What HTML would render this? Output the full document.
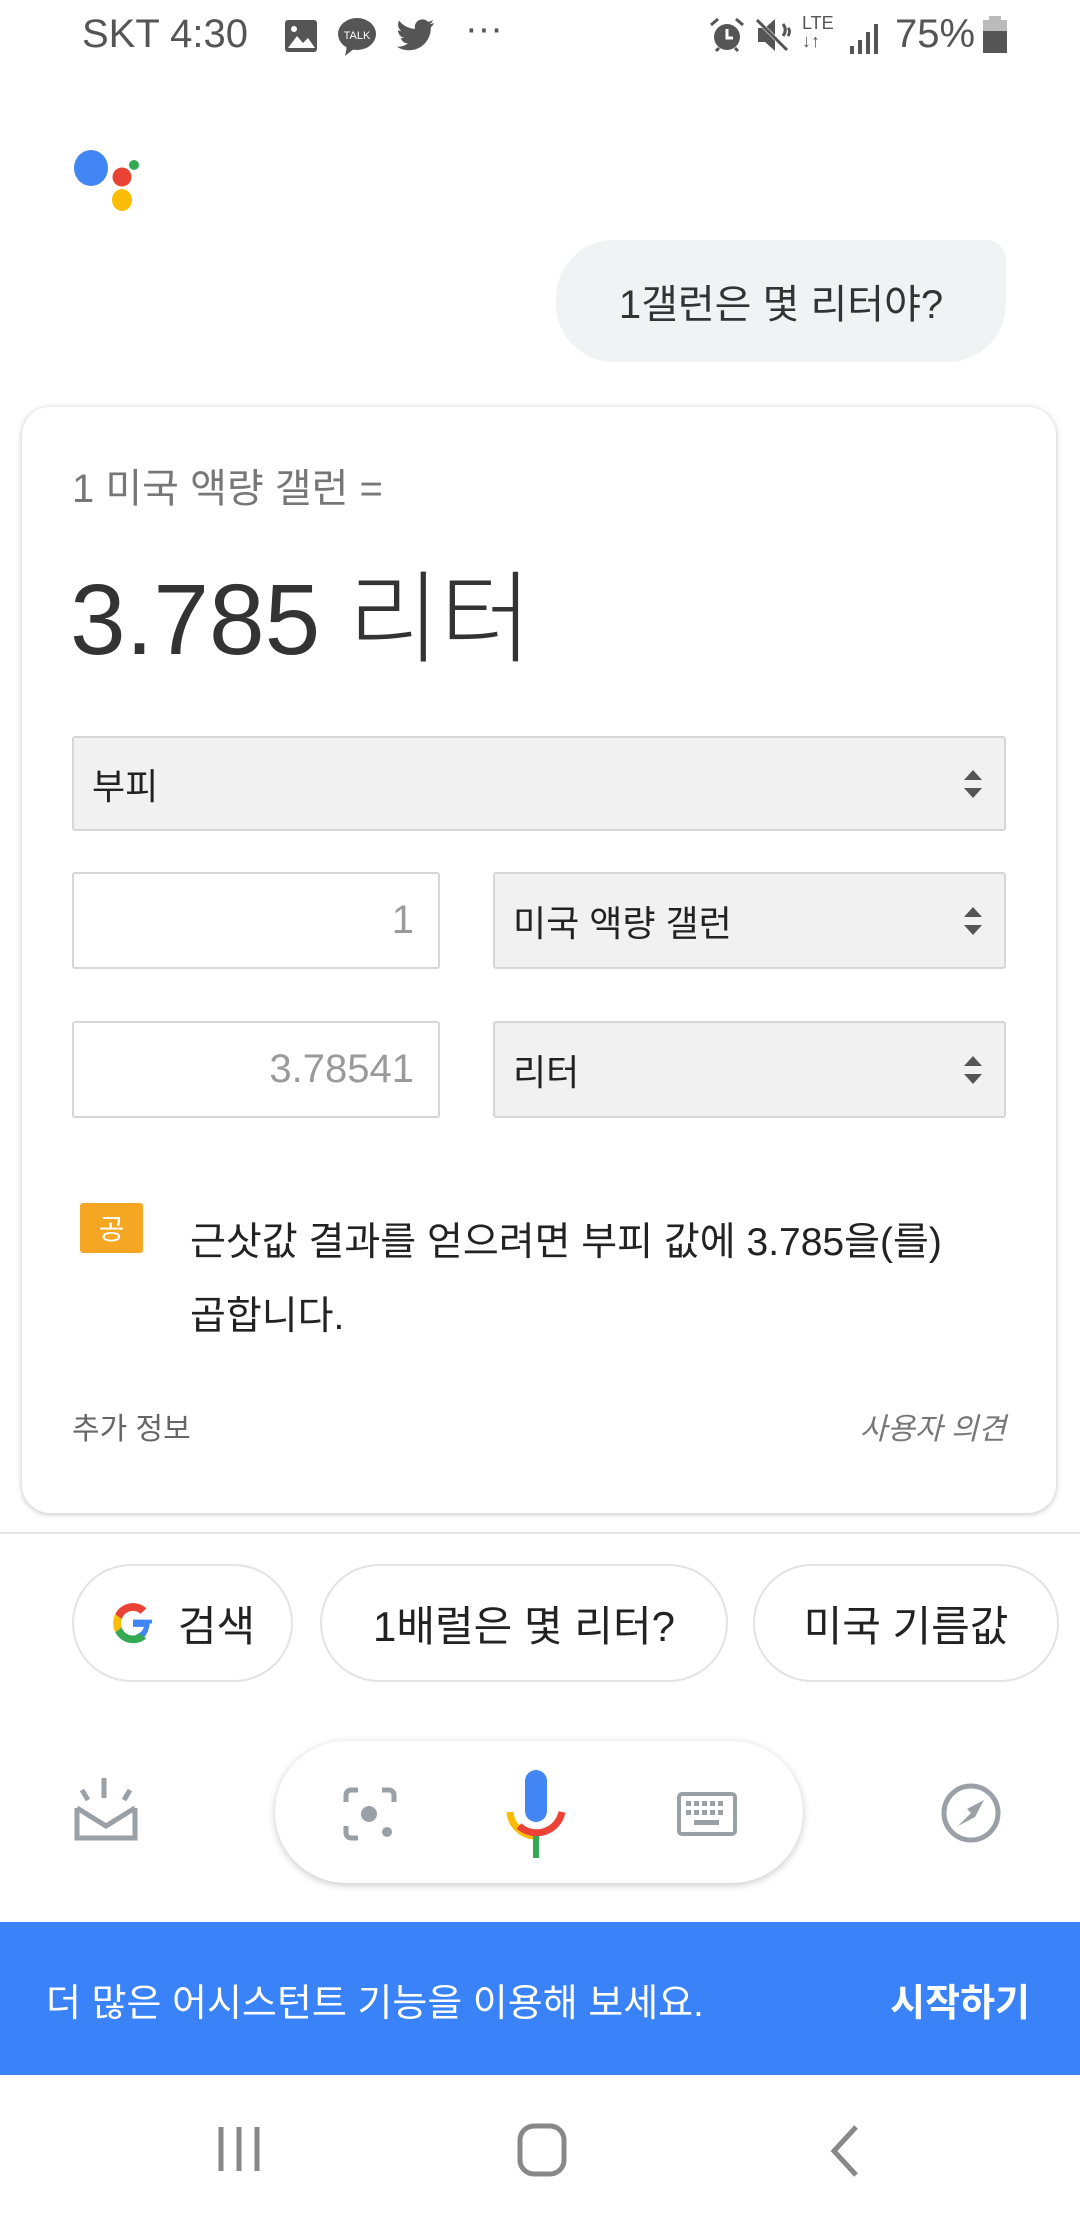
<!DOCTYPE html>
<html><head><meta charset="utf-8"><style>
*{margin:0;padding:0;box-sizing:border-box}
body{width:1080px;height:2220px;background:#fff;position:relative;overflow:hidden;font-family:"Liberation Sans","Noto Sans CJK KR",sans-serif;color:#202124}
.a{position:absolute}
.sel{position:absolute;background:#f1f1f1;border:2px solid #d6d6d6;border-radius:3px;font-size:36px;color:#222;padding-left:18px;display:flex;align-items:center}
.inp{position:absolute;background:#fff;border:2px solid #d6d6d6;border-radius:3px;font-size:40px;color:#9a9a9a;display:flex;align-items:center;justify-content:flex-end;padding-right:24px}
.arr{position:absolute;right:20px;top:50%;transform:translateY(-50%);width:22px;height:36px}
.chip{position:absolute;top:1564px;height:118px;border:2px solid #e3e3e3;border-radius:59px;background:#fff;display:flex;align-items:center;justify-content:center;font-size:42px;color:#222}
</style></head><body>
<!-- status bar -->
<div class="a" style="left:82px;top:12px;font-size:40px;color:#555">SKT 4:30</div>
<svg class="a" style="left:283px;top:18px" width="36" height="36"><rect x="2" y="2" width="32" height="32" rx="3" fill="#555"/><path d="M5 30 L14 18 L20 25 L25 20 L32 30Z" fill="#fff"/><circle cx="11" cy="11" r="3" fill="#fff"/></svg>
<svg class="a" style="left:337px;top:16px" width="40" height="40"><ellipse cx="20" cy="18" rx="19" ry="16" fill="#555"/><path d="M10 30 L8 40 L18 32Z" fill="#555"/><text x="20" y="23" font-size="11" fill="#fff" text-anchor="middle" font-family="Liberation Sans">TALK</text></svg>
<svg class="a" style="left:396px;top:18px" width="40" height="36" viewBox="0 0 40 36"><path d="M38 5c-1.4.6-2.900 1-4.400 1.200 1.600-1 2.800-2.500 3.400-4.200-1.500.9-3.100 1.500-4.900 1.900C30.700 2.300 28.700 1.400 26.500 1.400c-4.300 0-7.700 3.400-7.700 7.700 0 .6.100 1.200.200 1.800C12.600 10.600 6.900 7.500 3.100 2.800c-.7 1.100-1 2.500-1 3.900 0 2.700 1.400 5.100 3.400 6.400-1.300 0-2.500-.4-3.500-1v.1c0 3.700 2.700 6.900 6.200 7.600-.7.200-1.300.3-2 .3-.5 0-1 0-1.500-.1 1 3.100 3.800 5.300 7.200 5.400-2.600 2.100-6 3.300-9.600 3.300H1c3.400 2.200 7.500 3.500 11.800 3.500 14.200 0 22-11.800 22-22v-1C36.300 8.300 37.300 6.700 38 5z" fill="#555"/></svg>
<div class="a" style="left:465px;top:8px;font-size:38px;color:#555">···</div>
<svg class="a" style="left:708px;top:16px" width="38" height="38"><circle cx="19" cy="21" r="13" fill="#555"/><path d="M19 13v9h6" stroke="#fff" stroke-width="3" fill="none"/><path d="M3 9l7-6 M35 9l-7-6 M8 35l3-3 M30 35l-3-3" stroke="#555" stroke-width="3"/></svg>
<svg class="a" style="left:755px;top:16px" width="40" height="38"><path d="M3 12h7l10-9v32l-10-9H3z" fill="#555"/><path d="M2 4l32 32" stroke="#fff" stroke-width="4"/><path d="M2 4l30 30" stroke="#555" stroke-width="3"/><path d="M28 8c3 4 3 8 0 12 M33 12c2 2 2 5 0 8" stroke="#555" stroke-width="3" fill="none"/></svg>
<div class="a" style="left:802px;top:14px;font-size:18px;line-height:18px;color:#555">LTE<br>↓↑</div>
<svg class="a" style="left:848px;top:20px" width="36" height="36"><rect x="2" y="26" width="4" height="8" fill="#555"/><rect x="10" y="20" width="4" height="14" fill="#555"/><rect x="18" y="12" width="4" height="22" fill="#555"/><rect x="26" y="4" width="4" height="30" fill="#555"/></svg>
<div class="a" style="left:895px;top:12px;font-size:40px;color:#555">75%</div>
<svg class="a" style="left:981px;top:16px" width="28" height="40"><rect x="8" y="0" width="12" height="5" fill="#bbb"/><rect x="2" y="4" width="24" height="12" fill="#bbb"/><rect x="2" y="15" width="24" height="22" fill="#555"/></svg>

<!-- assistant dots -->
<svg class="a" style="left:70px;top:145px" width="75" height="70"><ellipse cx="21" cy="23" rx="17" ry="18" fill="#4285f4"/><circle cx="52" cy="32" r="9.5" fill="#ea4335"/><circle cx="64" cy="20" r="5" fill="#34a853"/><ellipse cx="52" cy="55" rx="10" ry="11" fill="#fbbc05"/></svg>

<!-- bubble -->
<div class="a" style="left:556px;top:240px;width:450px;height:122px;background:#f1f2f4;border-radius:58px 20px 58px 58px;display:flex;align-items:center;justify-content:center;font-size:40px;color:#333">1갤런은 몇 리터야?</div>

<!-- card -->
<div class="a" style="left:22px;top:407px;width:1034px;height:1106px;border-radius:28px;background:#fff;box-shadow:0 1px 6px rgba(0,0,0,.25)"></div>
<div class="a" style="left:72px;top:456px;font-size:40px;color:#777">1 미국 액량 갤런 =</div>
<div class="a" style="left:70px;top:555px;font-size:100px;font-weight:300;color:#333;line-height:130px">3.785 리터</div>

<div class="sel" style="left:72px;top:736px;width:934px;height:95px">부피<svg class="arr" viewBox="0 0 22 36"><path d="M2 14 L11 4 L20 14Z M2 22 L11 32 L20 22Z" fill="#555"/></svg></div>
<div class="inp" style="left:72px;top:872px;width:368px;height:97px">1</div>
<div class="sel" style="left:493px;top:872px;width:513px;height:97px">미국 액량 갤런<svg class="arr" viewBox="0 0 22 36"><path d="M2 14 L11 4 L20 14Z M2 22 L11 32 L20 22Z" fill="#555"/></svg></div>
<div class="inp" style="left:72px;top:1021px;width:368px;height:97px">3.78541</div>
<div class="sel" style="left:493px;top:1021px;width:513px;height:97px">리터<svg class="arr" viewBox="0 0 22 36"><path d="M2 14 L11 4 L20 14Z M2 22 L11 32 L20 22Z" fill="#555"/></svg></div>

<div class="a" style="left:80px;top:1203px;width:63px;height:50px;background:#f5a623;border-radius:3px;color:#fff;font-size:28px;display:flex;align-items:center;justify-content:center">공</div>
<div class="a" style="left:190px;top:1206px;font-size:39px;line-height:74px;color:#222;width:840px">근삿값 결과를 얻으려면 부피 값에 3.785을(를)<br>곱합니다.</div>
<div class="a" style="left:72px;top:1404px;font-size:30px;color:#666">추가 정보</div>
<div class="a" style="right:74px;top:1404px;font-size:30px;color:#777;font-style:italic">사용자 의견</div>

<div class="a" style="left:0;top:1532px;width:1080px;height:2px;background:#e6e6e6"></div>

<!-- chips -->
<div class="chip" style="left:72px;width:221px"><svg width="46" height="46" viewBox="0 0 48 48" style="margin-right:22px"><path d="M44 24.5c0-1.6-.1-2.8-.4-4H24v7.6h11.3c-.5 3-3.2 6.6-8 7.8l6.4 5c4.8-4.5 7.5-10.5 7.5-16.4z" fill="#4285f4"/><path d="M24 45c5.6 0 10.3-1.8 13.7-5l-6.5-5c-1.7 1.2-4.1 2.1-7.2 2.1-5.5 0-10.1-3.6-11.8-8.6l-6.7 5.2C9 40.6 16 45 24 45z" fill="#34a853"/><path d="M12.2 28.5c-.4-1.3-.7-2.8-.7-4.3s.3-3 .7-4.3L5.5 14.7C4.1 17.5 3.3 20.7 3.3 24.2s.8 6.7 2.2 9.5z" fill="#fbbc05"/><path d="M24 11.3c3.9 0 6.5 1.7 8 3.100l5.900-5.700C34.300 5.300 29.600 3.300 24 3.300 16 3.300 9 7.800 5.500 14.700l6.700 5.200C13.900 14.900 18.500 11.300 24 11.300z" fill="#ea4335"/></svg>검색</div>
<div class="chip" style="left:320px;width:408px">1배럴은 몇 리터?</div>
<div class="chip" style="left:753px;width:306px">미국 기름값</div>

<!-- bottom toolbar -->
<svg class="a" style="left:74px;top:1778px" width="66" height="70"><path d="M30 0v20 M8 12l6 10 M56 12l-6 10" stroke="#9aa0a6" stroke-width="5" fill="none"/><path d="M3 30v30h58V30 M3 30l29 18 29-18" stroke="#9aa0a6" stroke-width="5" fill="none"/></svg>
<div class="a" style="left:275px;top:1741px;width:528px;height:142px;border-radius:71px;background:#fff;box-shadow:0 2px 8px rgba(0,0,0,.22)"></div>
<svg class="a" style="left:342px;top:1786px" width="56" height="56"><path d="M4 16V9a5 5 0 0 1 5-5h7 M40 4h7a5 5 0 0 1 5 5v7 M4 40v7a5 5 0 0 0 5 5h7" stroke="#9aa0a6" stroke-width="5" fill="none"/><circle cx="27" cy="28" r="8" fill="#9aa0a6"/><circle cx="45" cy="46" r="5" fill="#9aa0a6"/></svg>
<svg class="a" style="left:506px;top:1768px" width="60" height="92"><rect x="19" y="2" width="22" height="52" rx="11" fill="#4285f4"/><path d="M4 44a26 26 0 0 0 26 24" stroke="#fbbc05" stroke-width="7" fill="none"/><path d="M13 58a26 26 0 0 0 43-14" stroke="#ea4335" stroke-width="7" fill="none"/><rect x="27" y="68" width="6" height="22" fill="#34a853"/></svg>
<svg class="a" style="left:677px;top:1792px" width="60" height="44"><rect x="2" y="2" width="56" height="40" rx="3" fill="none" stroke="#9aa0a6" stroke-width="4"/><g fill="#9aa0a6"><rect x="9" y="9" width="5" height="5"/><rect x="17" y="9" width="5" height="5"/><rect x="25" y="9" width="5" height="5"/><rect x="33" y="9" width="5" height="5"/><rect x="41" y="9" width="5" height="5"/><rect x="9" y="18" width="5" height="5"/><rect x="17" y="18" width="5" height="5"/><rect x="25" y="18" width="5" height="5"/><rect x="33" y="18" width="5" height="5"/><rect x="41" y="18" width="5" height="5"/><rect x="17" y="28" width="25" height="5"/></g></svg>
<svg class="a" style="left:940px;top:1782px" width="62" height="62"><circle cx="31" cy="31" r="27" stroke="#9aa0a6" stroke-width="5" fill="none"/><path d="M44 18L35 35 18 44 27 27Z" fill="#9aa0a6"/><path d="M31 31L18 44 27 27Z" fill="#fff"/></svg>

<!-- banner -->
<div class="a" style="left:0;top:1922px;width:1080px;height:153px;background:#3a82f7"></div>
<div class="a" style="left:46px;top:1972px;font-size:38px;color:#fff">더 많은 어시스턴트 기능을 이용해 보세요.</div>
<div class="a" style="right:50px;top:1972px;font-size:38px;color:#fff;font-weight:bold">시작하기</div>

<!-- nav bar -->
<svg class="a" style="left:215px;top:2124px" width="48" height="50"><path d="M6 3v44 M24 3v44 M42 3v44" stroke="#888" stroke-width="5"/></svg>
<svg class="a" style="left:516px;top:2122px" width="52" height="56"><rect x="4" y="4" width="44" height="48" rx="14" stroke="#888" stroke-width="5" fill="none"/></svg>
<svg class="a" style="left:826px;top:2124px" width="36" height="54"><path d="M30 3L8 27 30 51" stroke="#888" stroke-width="5" fill="none"/></svg>
</body></html>
